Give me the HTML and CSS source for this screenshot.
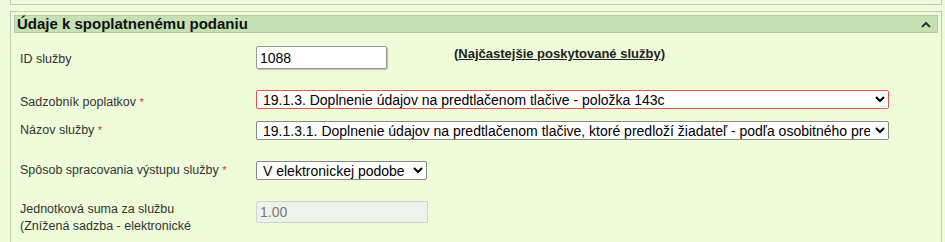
FILE: index.html
```html
<!DOCTYPE html>
<html lang="sk">
<head>
    <meta charset="UTF-8">
    <title>Údaje k spoplatnenému podaniu</title>
    <link rel="stylesheet" href="styles.css">
</head>
<body>
    <div class="prev-box"></div>

    <div class="panel">
        <div class="panel-head">
            <span>Údaje k spoplatnenému podaniu</span>
            <span class="toggle">
                <svg width="10" height="7" viewBox="0 0 10 7"><path d="M1 6 L5 2 L9 6" fill="none" stroke="#333" stroke-width="2"/></svg>
            </span>
        </div>

        <div class="panel-body">
            <div class="row row-id">
                <label>ID služby</label>
                <input type="text" class="inp-id" value="1088">
                <a href="#" class="common-link">(<u>Najčastejšie poskytované služby</u>)</a>
            </div>
            <div class="row row-sadz">
                <label>Sadzobník poplatkov <span class="req">*</span></label>
                <select class="sel-wide sel-error">
                    <option>19.1.3. Doplnenie údajov na predtlačenom tlačive - položka 143c</option>
                </select>
            </div>
            <div class="row row-nazov">
                <label>Názov služby <span class="req">*</span></label>
                <select class="sel-wide">
                    <option>19.1.3.1. Doplnenie údajov na predtlačenom tlačive, ktoré predloží žiadateľ - podľa osobitného predpisu</option>
                </select>
            </div>
            <div class="row row-sposob">
                <label>Spôsob spracovania výstupu služby <span class="req">*</span></label>
                <select class="sel-short">
                    <option>V elektronickej podobe</option>
                </select>
            </div>
            <div class="row row-suma">
                <label>Jednotková suma za službu<br>(Znížená sadzba - elektronické</label>
                <input type="text" class="inp-suma" value="1.00" disabled>
            </div>
        </div>
    </div>
</body>
</html>
```

FILE: styles.css
```css
body {
    margin: 0;
    padding: 0;
    background: #effcd9;
    font-family: "Liberation Sans", Arial, sans-serif;
    font-size: 12.5px;
    color: #222;
    height: 242px;
    overflow: hidden;
}
.prev-box {
    margin: 0 3px 0 10px;
    height: 4px;
    border-left: 1px solid #c4c9bc;
    border-right: 1px solid #c4c9bc;
    border-bottom: 1px solid #c4c9bc;
}
.panel {
    margin: 6px 3px 0 10px;
    border: 1px solid #c4c9bc;
    border-bottom: none;
    padding: 3px 3px 0 3px;
    height: 230px;
}
.panel-head {
    background: #c6e0b4;
    border: 1px solid #b8c9ab;
    height: 16px;
    line-height: 16px;
    padding: 0 6px 0 2px;
    font-weight: bold;
    font-size: 15px;
    color: #111;
    display: flex;
    justify-content: space-between;
    align-items: center;
}
.toggle {
    display: flex;
    align-items: center;
}
.panel-body {
    padding: 0 0 0 6px;
}
.row {
    display: flex;
    align-items: center;
}
.row label {
    width: 236px;
    flex-shrink: 0;
    color: #333;
    line-height: 17px;
}
.req {
    color: #e03030;
    font-size: 11px;
}
input, select {
    font-family: "Liberation Sans", Arial, sans-serif;
    font-size: 14px;
    color: #000;
    box-sizing: border-box;
    margin: 0;
}
.row-id {
    margin-top: 13px;
    height: 24px;
    align-items: flex-start;
}
.row-id label {
    padding-top: 5px;
}
.inp-id {
    width: 131px;
    height: 23px;
    border: 1px solid #999;
    border-radius: 2px;
    padding: 0 3px;
    box-shadow: 1px 1px 1px #bbb;
}
.common-link {
    margin-left: 67px;
    font-weight: bold;
    font-size: 13px;
    color: #222;
    text-decoration: none;
}
.row-sadz {
    margin-top: 18px;
}
.row-sadz label {
    padding-top: 6px;
}
.sel-wide {
    width: 633px;
    height: 19px;
    border: 1px solid #888;
    border-radius: 2px;
    background: #fff;
    padding: 0 2px;
}
.sel-error {
    border-color: #f05050;
}
.row-nazov {
    margin-top: 10px;
}
.row-sposob {
    margin-top: 21px;
}
.sel-short {
    width: 171px;
    height: 19px;
    border: 1px solid #888;
    border-radius: 2px;
    background: #fff;
    padding: 0 2px;
}
.row-suma {
    margin-top: 21px;
    align-items: flex-start;
}
.inp-suma {
    width: 172px;
    height: 22px;
    border: 1px solid #d0d4cc;
    border-radius: 2px;
    background: #eff1ec;
    color: #777;
    padding: 0 3px;
}
```
